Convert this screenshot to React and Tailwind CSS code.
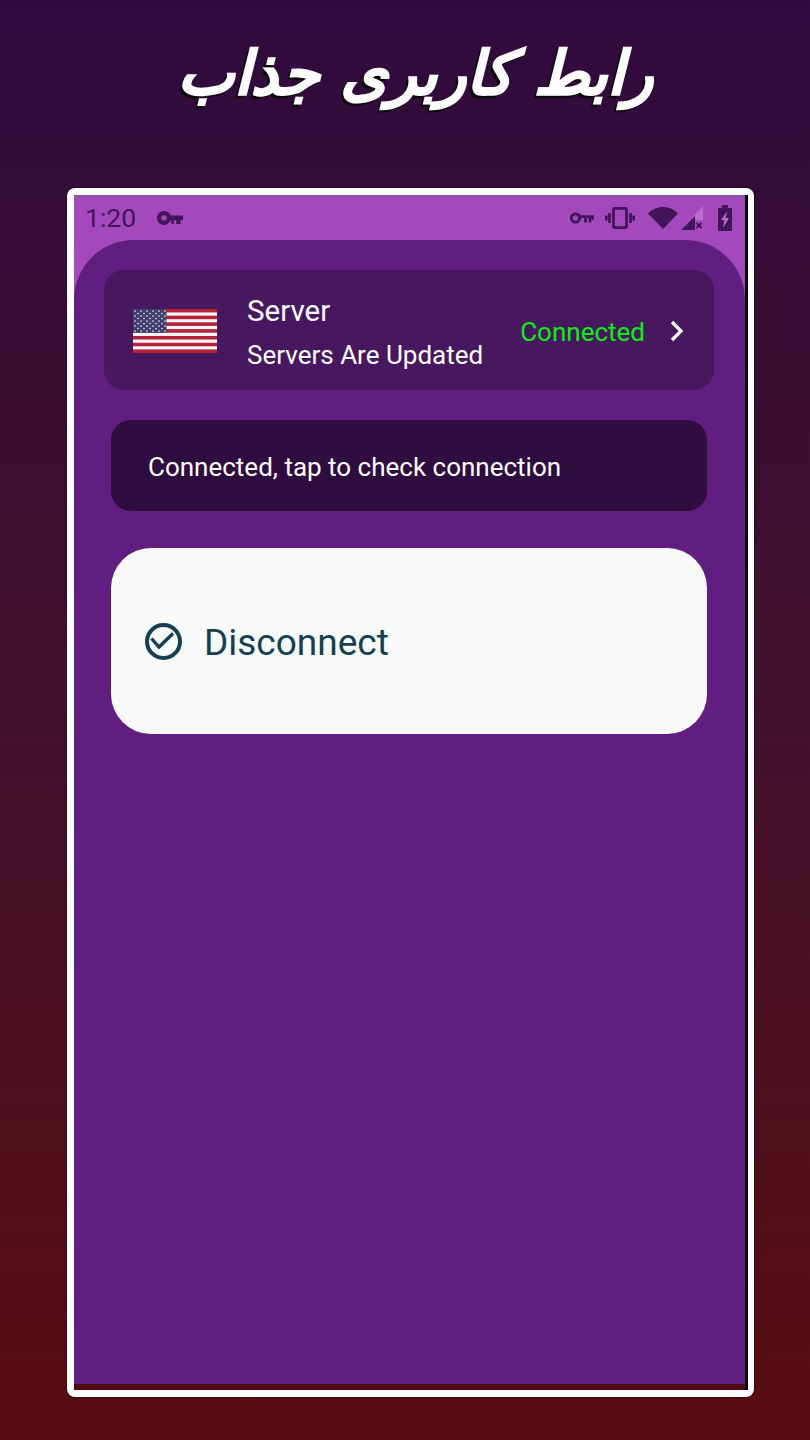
import React from 'react';

function KeyIcon({ className }) {
  return (
    <svg viewBox="0 0 26 14" className={className} fill="currentColor">
      <path fillRule="evenodd" d="M7 0a7 7 0 0 1 6.6 4.6H26v4.6h-2.4V13h-4.4V9.2h-2.4V13h-2.6V9.2h-.6A7 7 0 1 1 7 0Zm0 4.200a2.800 2.800 0 1 0 0 5.600 2.800 2.800 0 0 0 0-5.600Z" />
    </svg>
  );
}

function KeyOutline({ className }) {
  return (
    <svg viewBox="0 0 24 12" className={className} fill="none" stroke="currentColor" strokeWidth="2.8">
      <circle cx="5.500" cy="6" r="4.200" />
      <path d="M10 4.600H23V7.800M20 5v5.500M15.500 5v5.500" />
    </svg>
  );
}

function UsFlag() {
  const stripes = [0, 1, 2, 3, 4, 5, 6, 7, 8, 9, 10, 11, 12];
  const rows = [0, 1, 2, 3, 4, 5, 6, 7, 8];
  const cols = [0, 1, 2, 3, 4, 5, 6, 7, 8, 9, 10];
  return (
    <svg viewBox="0 0 84 44" className="w-[84px] h-[44px] shrink-0 mt-[2px]">
      {stripes.map((i) => (
        <rect key={i} x="0" y={(i * 44) / 13} width="84" height={44 / 13 + 0.1} fill={i % 2 === 0 ? '#b92234' : '#f7f4f5'} />
      ))}
      <rect x="0" y="0" width="33.500" height="23.700" fill="#3e3f6e" />
      {rows.map((r) =>
        cols.map((c) =>
          (r + c) % 2 === 0 ? <circle key={r + '-' + c} cx={2 + c * 3} cy={2 + r * 2.5} r="0.85" fill="#e6e6ee" /> : null
        )
      )}
    </svg>
  );
}

function StatusBar() {
  return (
    <div className="h-[45px] flex justify-between items-start pt-[7px] pl-[11px] pr-[12px] text-[#42145a] border-t border-[#75608a]">
      <div className="flex items-center">
        <span className="text-[26.500px] leading-[30px]">1:20</span>
        <KeyIcon className="w-[26px] h-[14px] ml-[21px] -mt-[1px]" />
      </div>
      <div className="flex items-center h-[30px]">
        <KeyOutline className="w-[24px] h-[12px]" />
        <svg viewBox="0 0 30 22" className="w-[30px] h-[22px] ml-[11px]" fill="none" stroke="currentColor" strokeWidth="2.800">
          <rect x="8.500" y="1.400" width="13" height="19.200" rx="1" />
          <path d="M4.500 6v10M1.200 8.500v5M25.500 6v10M28.800 8.500v5" />
        </svg>
        <svg viewBox="0 0 30 22" className="w-[30px] h-[22px] ml-[13px]" fill="currentColor">
          <path d="M15 22 0 6.500C4 2.500 9 0 15 0s11 2.500 15 6.500Z" />
        </svg>
        <svg viewBox="0 0 22 24" className="w-[22px] h-[24px] ml-[3px]">
          <path d="M22 0v14h-8v10H0Z" fill="#b86fcc" />
          <path d="M14 10v14H0Z" fill="currentColor" />
          <path d="M15.500 17l5 5M20.500 17l-5 5" stroke="currentColor" strokeWidth="1.800" />
        </svg>
        <svg viewBox="0 0 16 26" className="w-[16px] h-[26px] ml-[14px]" fill="currentColor">
          <path d="M5 0h6v3h4v23H1V3h4Z" />
          <path d="M10.500 6 4 15h3.500l-1.500 8 6-10H8.500Z" fill="#b86fcc" />
        </svg>
      </div>
    </div>
  );
}

export default function App() {
  return (
    <div className="w-[810px] h-[1440px] overflow-hidden bg-gradient-to-b from-[#2f0a3d] to-[#590c0f] font-['Roboto',sans-serif] pt-[38px]">
      <h1
        dir="rtl"
        className="h-[150px] text-center pl-[21px] text-white text-[60px] leading-[70px] font-bold italic font-['DejaVu_Sans',sans-serif] [-webkit-text-stroke:1.500px_white] [text-shadow:-3px_3px_1px_#0a0a0a]"
      >
        رابط کاربری جذاب
      </h1>

      {/* Phone frame */}
      <div className="ml-[67px] w-[687px] h-[1209px] bg-white rounded-[8px] shadow-[0_0_2px_#000] pt-[7px] pb-[7px] pl-[7px] pr-[6px]">
        <div className="h-full border-r-[3px] border-black">
          <div className="h-full border-b-[6px] border-[#4f0b11] flex flex-col bg-[#a349bc]">
            <StatusBar />

            <div className="flex-1 bg-[#611e80] rounded-t-[60px] pt-[30px] pl-[30px] pr-[31px]">
              <div className="h-[120px] bg-[#471860] rounded-[20px] flex items-center pl-[29px] pr-[30px]">
                <UsFlag />
                <div className="ml-[30px] flex-1 text-white pt-[4px]">
                  <div className="text-[29.500px] leading-[36px]">Server</div>
                  <div className="text-[26px] leading-[34px] mt-[9px]">Servers Are Updated</div>
                </div>
                <span className="text-[26px] text-[#0cf00c] pt-[4px]">Connected</span>
                <svg viewBox="0 0 14 22" className="w-[14px] h-[22px] ml-[25px] mt-[1px]" fill="none" stroke="white" strokeWidth="3.200">
                  <path d="m2 2 9 9-9 9" />
                </svg>
              </div>

              <div className="mx-[7px] mt-[30px] h-[91px] bg-[#2f0d3e] rounded-[20px] flex items-center pl-[37px] pt-[4px] text-white text-[26px]">
                Connected, tap to check connection
              </div>

              <div className="mx-[7px] mt-[37px] h-[186px] bg-[#f8faf9] rounded-[40px] flex items-center pl-[34px] text-[#153f54]">
                <svg viewBox="0 0 37 37" className="w-[37px] h-[37px]" fill="none" stroke="currentColor">
                  <circle cx="18.500" cy="18.500" r="16.500" strokeWidth="4" />
                  <path d="M6.500 15.500 14 24 28 10.500" strokeWidth="3.400" />
                </svg>
                <span className="ml-[22px] text-[37px] pt-[4px]">Disconnect</span>
              </div>
            </div>
          </div>
        </div>
      </div>
    </div>
  );
}
